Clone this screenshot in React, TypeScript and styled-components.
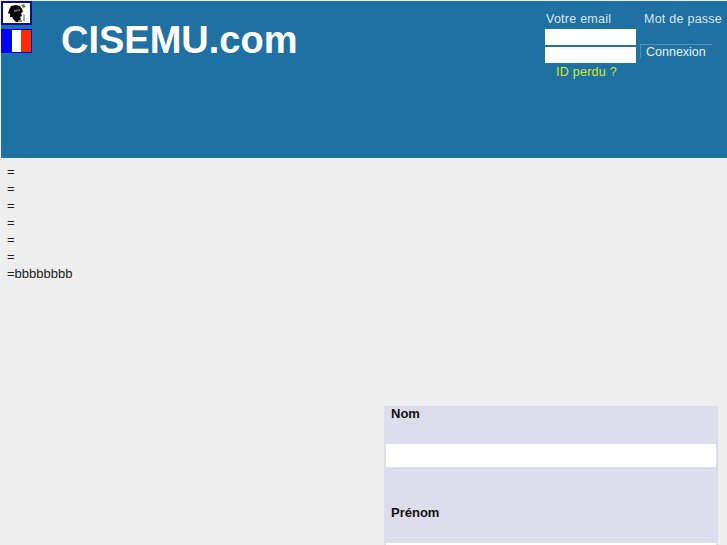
import styled, { createGlobalStyle } from "styled-components";

const GlobalStyle = createGlobalStyle`
  html, body {
    margin: 0;
    padding: 0;
    height: 100%;
    overflow: hidden;
    background: #eeeeee;
  }
  body {
    font-family: "Liberation Sans", Arial, sans-serif;
    font-size: 13px;
    color: #222;
  }
`;

const Page = styled.div`
  height: 545px;
  padding: 1px 0 0 1px;
  box-sizing: border-box;
  overflow: hidden;
`;

const Header = styled.header`
  height: 157px;
  background: #1f71a3;
  display: flex;
  align-items: flex-start;
`;

const Flags = styled.div`
  width: 31px;
  display: flex;
  flex-direction: column;
  gap: 4px;
`;

const FlagFrame = styled.div`
  width: 31px;
  height: 24px;
  box-sizing: border-box;
  border: 1px solid #0000e0;
  display: flex;
  overflow: hidden;
`;

const CorsicaFrame = styled(FlagFrame)`
  background: #fff;
  box-shadow: inset 0 0 0 1px #14145a;
`;

const Stripe = styled.div<{ $color: string }>`
  flex: 1;
  background: ${(p) => p.$color};
`;

const Title = styled.h1`
  margin: 17px 0 0 29px;
  width: 484px;
  flex: none;
  font-size: 38px;
  line-height: 44px;
  font-weight: bold;
  color: #fff;
`;

const LoginForm = styled.form`
  margin: 11px 0 0 0;
  display: grid;
  grid-template-columns: 91px 1fr;
  grid-template-rows: 16px 17px 17px 17px;
  row-gap: 1px;
`;

const FieldLabel = styled.label`
  font-size: 12.5px;
  line-height: 14px;
  letter-spacing: 0.25px;
  color: #d9e6ef;
  white-space: nowrap;
`;

const EmailLabel = styled(FieldLabel)`
  grid-column: 1;
  grid-row: 1;
  margin-left: 1px;
`;

const PasswordLabel = styled(FieldLabel)`
  grid-column: 2;
  grid-row: 1;
  margin-left: 8px;
`;

const TextInput = styled.input`
  display: block;
  width: 91px;
  height: 16px;
  box-sizing: border-box;
  border: none;
  padding: 0;
  background: #fff;
  grid-column: 1;
`;

const ConnectButton = styled.button`
  grid-column: 2;
  grid-row: 3;
  margin: -3px 0 0 4px;
  width: 72px;
  height: 14px;
  padding: 0 0 0 5px;
  text-align: left;
  background: transparent;
  border: none;
  border-top: 1px solid #4f8fb8;
  border-left: 1px solid #4f8fb8;
  color: #e8eff4;
  font-family: inherit;
  font-size: 12.5px;
  line-height: 14px;
  white-space: nowrap;
`;

const LostLink = styled.a`
  grid-column: 1;
  grid-row: 4;
  margin: -1px 0 0 11px;
  font-size: 12.5px;
  line-height: 16px;
  letter-spacing: 0.25px;
  color: #d6ea1a;
  white-space: nowrap;
`;

const Lines = styled.div`
  padding: 5px 0 0 6px;
  height: 248px;
  box-sizing: border-box;
`;

const Line = styled.div`
  height: 17px;
  line-height: 17px;
  font-size: 13px;
`;

const Panel = styled.section`
  margin-left: 383px;
  width: 334px;
  background: #dedded;
`;

const PanelLabel = styled.div`
  padding-left: 7px;
  height: 38px;
  font-size: 13px;
  line-height: 16px;
  font-weight: bold;
  color: #111;
`;

const PanelLabelSecond = styled(PanelLabel)`
  padding-top: 38px;
  height: 38px;
`;

const PanelInput = styled.div`
  margin: 0 2px;
  height: 23px;
  background: #fff;
`;

const CorsicaHead = () => (
  <svg width="29" height="22" viewBox="0 0 29 22">
    <path
      d="M9 4l5-1 4 1 2 3 1 3-2 1 1 3-2 1 1 2-3 3-2 0-2-2-2-3-2 0 0-3-2-1 1-3 1-2z"
      fill="#000"
    />
    <path d="M12 8l6-1 0 2-6 1z" fill="#666" />
    <path d="M19 3l3-1 2 3-3 1z" fill="#5f8a5f" />
    <path d="M21 12l2 1 0 6-2 0z" fill="#aaa" />
    <path d="M16 18l4 0 0 2-3 0z" fill="#888" />
  </svg>
);

export default function App() {
  return (
    <Page>
      <GlobalStyle />
      <Header>
        <Flags>
          <CorsicaFrame>
            <CorsicaHead />
          </CorsicaFrame>
          <FlagFrame>
            <Stripe $color="#0000ff" />
            <Stripe $color="#ffffff" />
            <Stripe $color="#ff2a00" />
          </FlagFrame>
        </Flags>
        <Title>CISEMU.com</Title>
        <LoginForm>
          <EmailLabel>Votre email</EmailLabel>
          <PasswordLabel>Mot de passe</PasswordLabel>
          <TextInput type="text" />
          <TextInput type="password" />
          <ConnectButton type="button">Connexion</ConnectButton>
          <LostLink>ID perdu ?</LostLink>
        </LoginForm>
      </Header>
      <Lines>
        {["=", "=", "=", "=", "=", "=", "=bbbbbbbb"].map((text, i) => (
          <Line key={i}>{text}</Line>
        ))}
      </Lines>
      <Panel>
        <PanelLabel>Nom</PanelLabel>
        <PanelInput />
        <PanelLabelSecond>Prénom</PanelLabelSecond>
        <PanelInput />
      </Panel>
    </Page>
  );
}
